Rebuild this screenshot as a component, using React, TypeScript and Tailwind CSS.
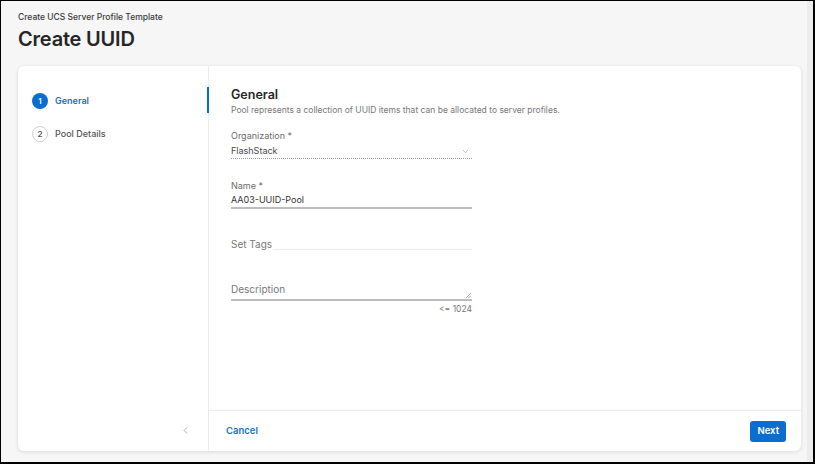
import { ChevronDown, ChevronLeft } from "lucide-react";

const STEPS = [
  { id: 1, label: "General", active: true },
  { id: 2, label: "Pool Details", active: false },
];

function Field({ label, children }: { label: string; children: React.ReactNode }) {
  return (
    <div className="w-[241px]">
      <div className="text-[9px] leading-[12px] text-[#6b6b6b]">{label}</div>
      {children}
    </div>
  );
}

export default function App() {
  return (
    <div
      className="flex h-[464px] w-[815px] border-b-2 border-l border-r-2 border-t border-black bg-[#f6f6f6] text-[#333]"
      style={{ fontFamily: "Inter, 'Noto Sans', sans-serif" }}
    >
      <div className="flex flex-1 flex-col">
        <header className="px-[17px] pt-[10px]">
          <div className="text-[8.5px] font-medium leading-[13px] text-[#3a3a3a]">
            Create UCS Server Profile Template
          </div>
          <h1 className="mt-[3px] text-[20px] font-semibold leading-[24px] tracking-[-0.2px] text-[#262626]">
            Create UUID
          </h1>
        </header>

        <div className="ml-[17px] mr-[6px] mt-[15px] flex h-[385px] overflow-hidden rounded-[6px] bg-white shadow-[0_1px_4px_rgba(0,0,0,0.12)]">
          {/* steps sidebar */}
          <aside className="flex w-[191px] flex-col border-r border-[#ececec] pt-[27px]">
            <ul className="flex flex-col gap-[17px]">
              {STEPS.map((s) => (
                <li key={s.id} className="flex h-[16px] items-center pl-[14px]">
                  <span
                    className={
                      s.active
                        ? "flex h-[16px] w-[16px] items-center justify-center rounded-full bg-[#0a6ed1] text-[8px] font-semibold text-white"
                        : "flex h-[16px] w-[16px] items-center justify-center rounded-full border border-[#cfcfcf] text-[8px] font-semibold text-[#555]"
                    }
                  >
                    {s.id}
                  </span>
                  <span
                    className={
                      s.active
                        ? "ml-[7px] text-[9px] font-semibold text-[#1d6fc4]"
                        : "ml-[7px] text-[9px] font-medium text-[#555]"
                    }
                  >
                    {s.label}
                  </span>
                </li>
              ))}
            </ul>
            <div className="mt-auto flex h-[41px] items-center justify-end pr-[17px] text-[#8a8a8a]">
              <ChevronLeft size={11} strokeWidth={1.5} />
            </div>
          </aside>

          {/* main */}
          <div className="relative flex flex-1 flex-col">
            <div className="absolute left-[-2px] top-[21px] h-[26px] w-[2px] bg-[#0a6ed1]" />
            <section className="flex-1 pl-[22px] pt-[21px]">
              <h2 className="text-[12.5px] font-semibold leading-[16px] text-[#262626]">General</h2>
              <p className="mt-[2px] text-[8.5px] leading-[11px] text-[#777]">
                Pool represents a collection of UUID items that can be allocated to server profiles.
              </p>

              <div className="mt-[14px]">
                <Field label="Organization *">
                  <div className="mt-[4px] flex h-[13px] items-center justify-between border-b border-dotted border-[#9a9a9a] pb-[2px]">
                    <span className="text-[9px] text-[#4a4a4a]">FlashStack</span>
                    <ChevronDown size={9} strokeWidth={1.5} className="mr-[2px] text-[#888]" />
                  </div>
                </Field>
              </div>

              <div className="mt-[21px]">
                <Field label="Name *">
                  <div className="mt-[3px] flex h-[14px] items-center border-b-2 border-[#bdbdbd] pb-[2px]">
                    <span className="text-[9px] text-[#333]">AA03-UUID-Pool</span>
                  </div>
                </Field>
              </div>

              <div className="mt-[29px] flex w-[241px] items-end">
                <span className="text-[10px] leading-[13px] text-[#777]">Set Tags</span>
                <div className="mb-[1px] ml-[1px] flex-1 border-b border-[#ececec]" />
              </div>

              <div className="mt-[24px] w-[241px]">
                <div className="relative border-b-2 border-[#bdbdbd]">
                  <span className="text-[10px] leading-[12px] text-[#777]">Description</span>
                  <svg
                    className="absolute bottom-[1px] right-[1px]"
                    width="5"
                    height="5"
                    viewBox="0 0 5 5"
                  >
                    <path d="M5 0 L0 5 M5 2.5 L2.5 5" stroke="#999" strokeWidth="0.8" />
                  </svg>
                </div>
                <div className="mt-[3px] text-right text-[8.5px] leading-[11px] text-[#777]">&lt;= 1024</div>
              </div>
            </section>

            <footer className="flex h-[41px] items-center justify-between border-t border-[#eeeeee] pl-[17px] pr-[15px] shadow-[0_-1px_2px_rgba(0,0,0,0.03)]">
              <button className="text-[9.5px] font-semibold text-[#1d6fc4]">Cancel</button>
              <button className="h-[21px] rounded-[3px] bg-[#0a6ed1] px-[7px] text-[9.5px] font-semibold text-white">
                Next
              </button>
            </footer>
          </div>
        </div>
      </div>
      <div className="w-[6px] bg-[#ececec]" />
    </div>
  );
}
